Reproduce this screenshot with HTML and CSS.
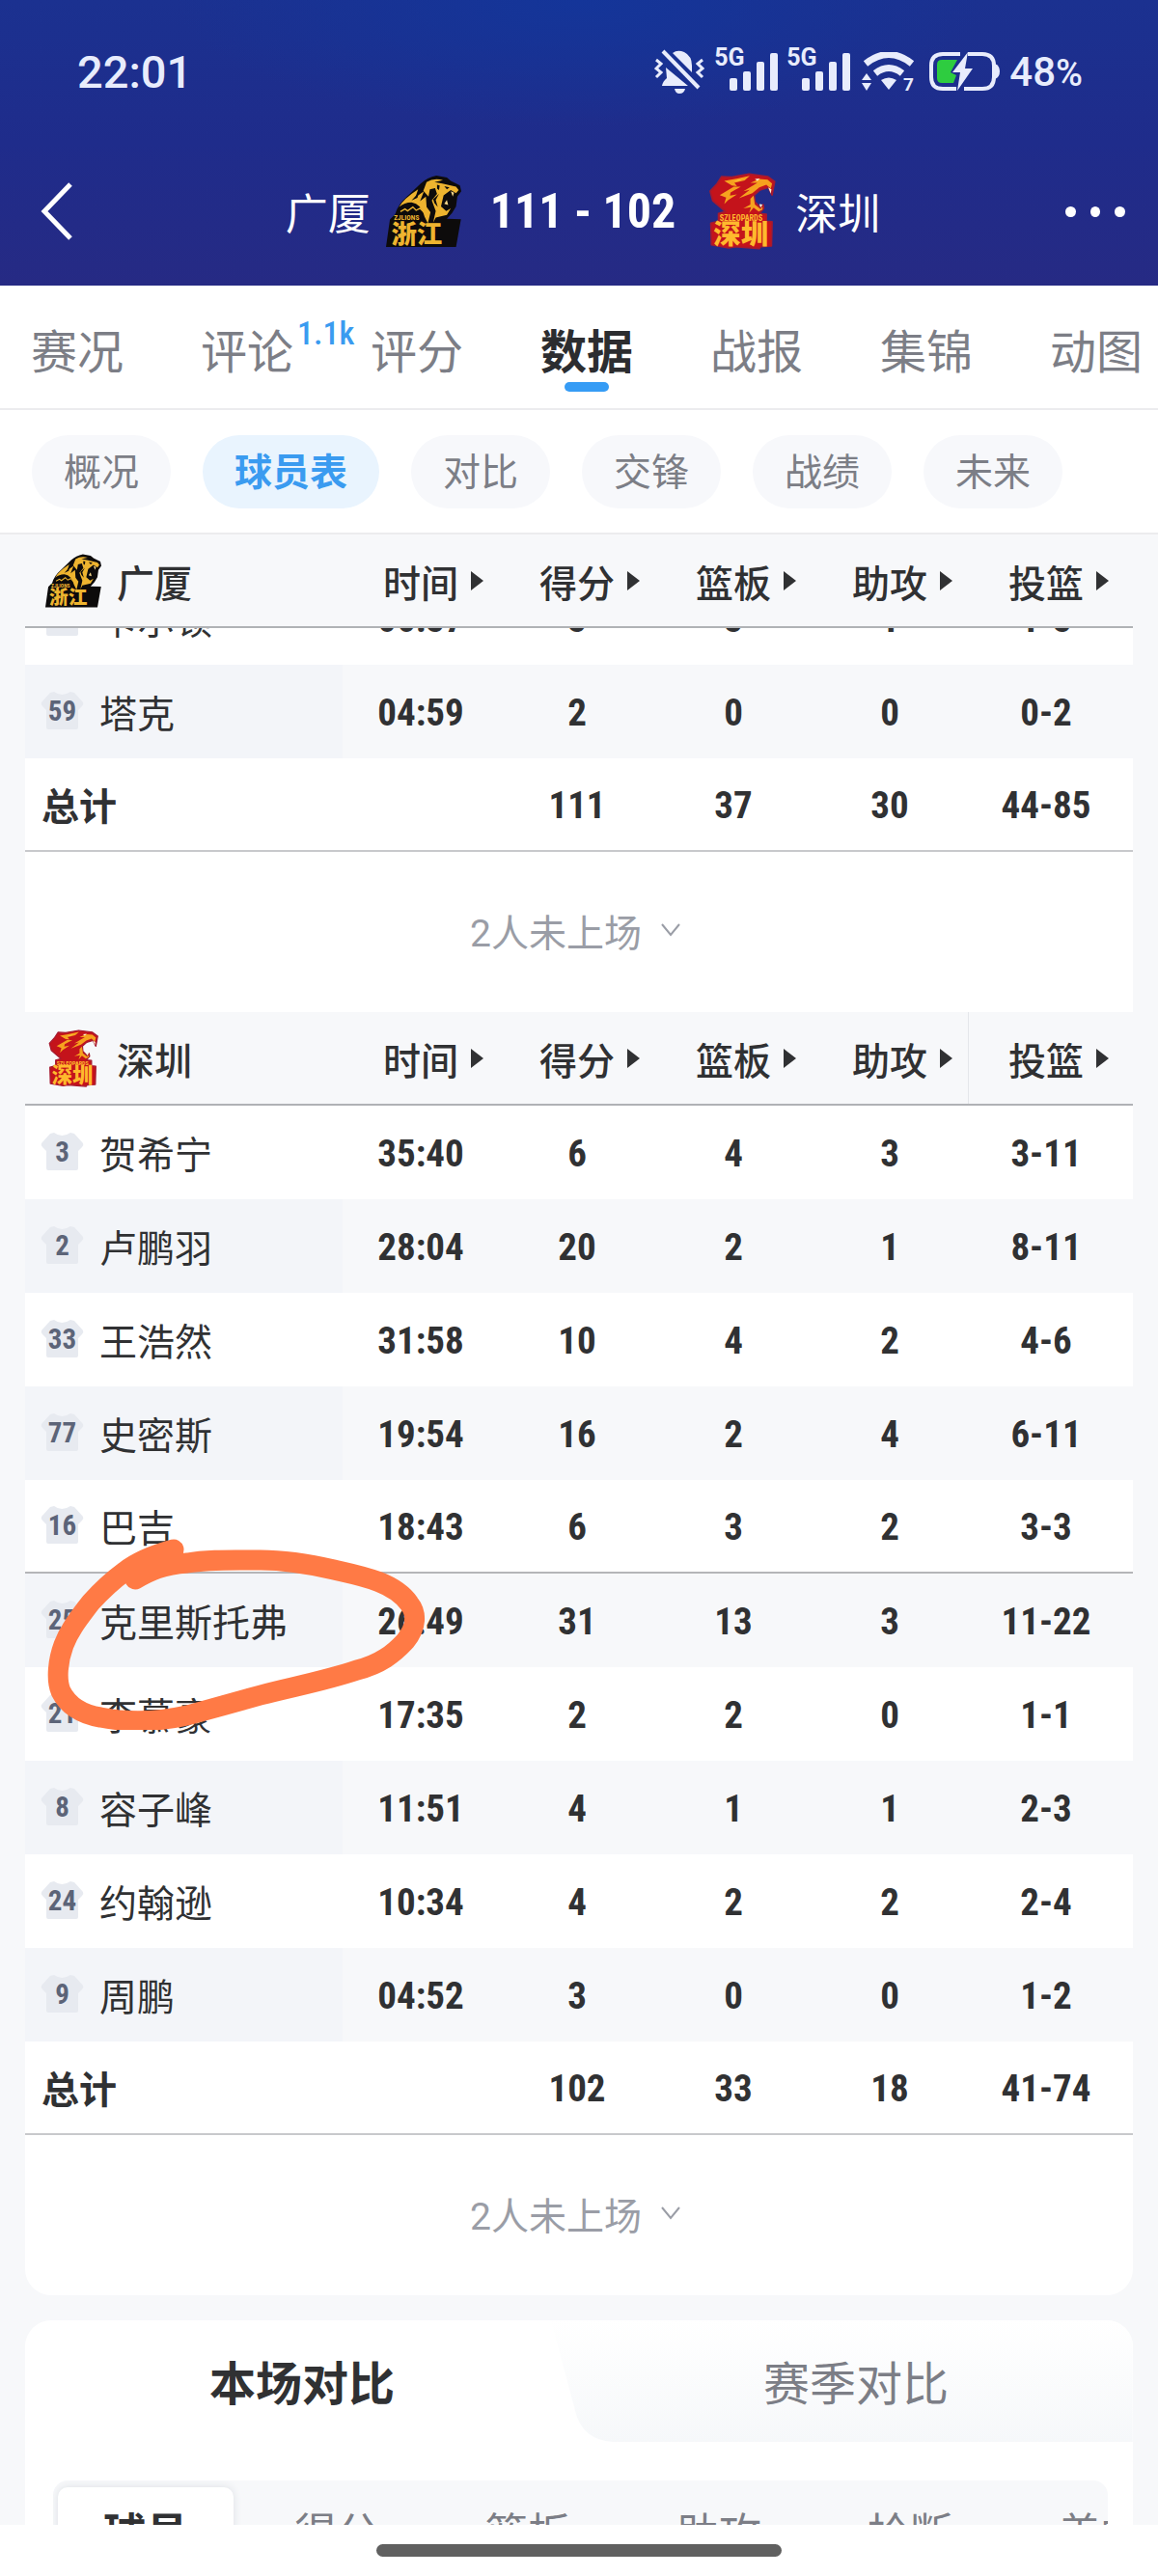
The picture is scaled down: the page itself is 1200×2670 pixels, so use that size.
FILE: index.html
```html
<!DOCTYPE html>
<html lang="zh-CN">
<head>
    <meta charset="UTF-8">
    <meta name="viewport" content="width=device-width, initial-scale=1.0">
    <title>广厦 111 - 102 深圳</title>
    <link rel="stylesheet" href="styles.css">
</head>
<body>

    <!-- 共用图标 -->
    <svg class="defs" aria-hidden="true">
        <symbol id="logo-gs" viewBox="60 62 230 222">
            <path fill="#0d0b0b" d="M60 282 L72 198 L88 182 Q96 152 124 128 L166 88 Q186 70 214 64 L246 70 L258 80 L286 94 L290 112 L278 128 L274 158 L262 178 L246 196 L289 197 L274 282 Z"/>
            <path fill="#eeb42f" d="M100 160 Q112 136 158 106 L150 130 L176 112 L164 142 L182 128 L184 160 L196 176 L188 210 L178 190 Q168 150 138 146 Q116 146 100 160 Z"/>
            <path fill="#eeb42f" d="M184 84 Q206 70 234 78 L208 84 L232 88 L274 98 L282 108 L274 118 L258 108 L236 124 L228 158 L244 172 L258 164 L246 184 L212 192 L204 208 L212 172 L200 140 L216 120 L210 102 L194 106 L190 128 L174 110 Z"/>
            <path fill="#0d0b0b" d="M216 92 L224 94 L222 108 L216 104 Z M238 96 L254 100 L246 106 Z M222 120 L212 138 L218 160 L208 148 L204 136 Z M160 116 L138 140 L156 132 Z"/>
            <path fill="#f6d78a" d="M258 112 L264 128 L268 116 Z M238 150 L246 138 L250 154 Z"/>
            <path fill="none" stroke="#eeb42f" stroke-width="4" d="M104 174 L118 166 L126 172 L142 160 L152 170 L164 164 L176 176"/>
            <text x="84" y="200" class="logo-small" fill="#eeb42f">ZJLIONS</text>
            <text x="76" y="269" class="logo-word" fill="#eeb42f">浙江</text>
        </symbol>
        <symbol id="logo-sz" viewBox="76 54 212 242">
            <path fill="#c4131b" stroke="#a51a30" stroke-width="5" stroke-linejoin="round" d="M82 112 L104 88 L118 66 L150 68 L204 58 L262 66 L284 82 L276 124 L264 100 L238 108 L220 124 L222 146 L240 164 L248 154 L250 166 L236 182 L258 184 L258 206 L276 208 L274 284 L240 286 L236 292 L160 286 L140 290 L86 280 L84 212 L108 206 L108 182 L130 176 L90 142 Z"/>
            <path fill="#f6a21f" d="M126 80 L160 74 L206 64 L190 78 L158 86 L166 96 L150 94 Z M262 76 L276 88 L272 104 L258 92 L236 100 L214 118 L172 134 L206 108 L186 112 L230 86 L208 86 L236 74 Z M112 124 L156 98 L178 98 L146 116 L144 126 L166 122 L138 140 L126 152 L132 132 Z M208 136 L218 126 L222 154 L240 168 L246 160 L246 170 L234 176 L218 164 L204 180 L210 162 L186 166 L208 154 Z"/>
            <path fill="#fff4d8" d="M264 100 L274 106 L272 120 Z M236 152 L246 154 L240 164 Z M222 74 L238 72 L230 80 Z"/>
            <path fill="#ffd34c" d="M156 80 L184 74 L170 80 Z"/>
            <text x="112" y="205" class="logo-mini" fill="#ffb92d">SZLEOPARDS</text>
            <text x="92" y="277" class="logo-word logo-word-sz" fill="#ffb92d">深圳</text>
        </symbol>
        <symbol id="jersey" viewBox="0 0 45 40">
            <path fill="#e7eaf0" d="M10 1 L14 0 Q22 6 31 0 L35 1 L44 11 Q45 13 43 15 L39 19 V37 Q39 39 37 39 H8 Q6 39 6 37 V19 L2 15 Q0 13 1 11 Z"/>
        </symbol>
        <symbol id="signal" viewBox="0 0 50 40">
            <rect x="0" y="27" width="8" height="13" rx="2"/>
            <rect x="14" y="20" width="8" height="20" rx="2"/>
            <rect x="28" y="10" width="8" height="30" rx="2"/>
            <rect x="42" y="1" width="8" height="39" rx="2"/>
        </symbol>
        <symbol id="chevron" viewBox="0 0 20 14">
            <path fill="none" stroke="#9a9da6" stroke-width="2" d="M1 1 L10 12 L19 1"/>
        </symbol>
    </svg>

    <header class="top">
        <!-- 状态栏 -->
        <div class="status">
            <span class="clock">22:01</span>
            <div class="status-icons">
                <svg class="icon-bell" viewBox="0 0 53 46">
                    <path d="M19 4 Q24 0 31 3 Q39 7 39 17 V24 Z M12 19 L35 38 H8 Q9 33 13 30 Z M21 41 H32 Q31 46 26 46 Q22 46 21 41 Z"/>
                    <path class="line" d="M9 2 L46 40"/>
                    <path class="line thin" d="M2 11 L7 15 L2 20 L7 24 L2 29 M50 11 L45 15 L50 20 L45 24 L50 29"/>
                </svg>
                <span class="sim"><span class="net">5G</span><svg class="icon-signal"><use href="#signal"/></svg></span>
                <span class="sim"><span class="net">5G</span><svg class="icon-signal"><use href="#signal"/></svg></span>
                <svg class="icon-wifi" viewBox="0 0 55 40">
                    <path class="line wide" d="M4 12 Q28 -7 52 12 M14 22 Q28 11 42 22"/>
                    <path d="M20 29 Q28 24 36 29 L28 39 Z M5 22 L10 29 H0 Z M0 32 H10 L5 40 Z"/>
                    <text x="43" y="40" class="wifi-num">7</text>
                </svg>
                <svg class="icon-battery" viewBox="0 0 74 40">
                    <path class="line" d="M32 2 H14 Q2 2 2 14 V26 Q2 38 14 38 H28 M40 2 H55 Q67 2 67 14 V26 Q67 38 55 38 H36"/>
                    <path d="M68 12 Q73 14 73 20 Q73 26 68 28 Z"/>
                    <path fill="#2ecc40" d="M13 8 H29 L22 21 L28 24 L25 32 H13 Q8 32 8 27 V13 Q8 8 13 8 Z"/>
                    <path d="M40 0 L24 21 H32 L29 40 L45 17 H37 Z"/>
                </svg>
                <span class="percent">48<small>%</small></span>
            </div>
        </div>
        <!-- 比分 -->
        <div class="score-bar">
            <button class="back" aria-label="返回">
                <svg viewBox="0 0 34 60"><path fill="none" stroke="#fff" stroke-width="5" d="M31 2 L4 30 L31 58"/></svg>
            </button>
            <div class="match">
                <span>广厦</span>
                <svg class="match-logo"><use href="#logo-gs"/></svg>
                <strong class="score">111 - 102</strong>
                <svg class="match-logo"><use href="#logo-sz"/></svg>
                <span>深圳</span>
            </div>
            <button class="more" aria-label="更多"><i></i><i></i><i></i></button>
        </div>
    </header>

    <nav class="tabs">
        <a href="#">赛况</a>
        <a href="#">评论<sup>1.1k</sup></a>
        <a href="#">评分</a>
        <a href="#" class="active">数据</a>
        <a href="#">战报</a>
        <a href="#">集锦</a>
        <a href="#">动图</a>
    </nav>

    <nav class="pills">
        <a href="#">概况</a>
        <a href="#" class="active">球员表</a>
        <a href="#">对比</a>
        <a href="#">交锋</a>
        <a href="#">战绩</a>
        <a href="#">未来</a>
    </nav>

    <main class="content">
        <!-- 广厦 -->
        <section class="team team-first">
            <table>
                <colgroup><col><col class="stat"><col class="stat"><col class="stat"><col class="stat"><col class="stat"><col class="edge"></colgroup>
                <thead>
                    <tr>
                        <th><div class="team-name"><svg><use href="#logo-gs"/></svg>广厦</div></th>
                        <th><button>时间</button></th>
                        <th><button>得分</button></th>
                        <th><button>篮板</button></th>
                        <th><button>助攻</button></th>
                        <th><button>投篮</button></th>
                        <th></th>
                    </tr>
                </thead>
                <tbody>
                    <tr><td><div class="player"><span class="num"><svg><use href="#jersey"/></svg><b>22</b></span>卡尔顿</div></td><td>06:37</td><td>3</td><td>3</td><td>1</td><td>1-3</td><td></td></tr>
                    <tr><td><div class="player"><span class="num"><svg><use href="#jersey"/></svg><b>59</b></span>塔克</div></td><td>04:59</td><td>2</td><td>0</td><td>0</td><td>0-2</td><td></td></tr>
                </tbody>
                <tfoot>
                    <tr><td>总计</td><td></td><td>111</td><td>37</td><td>30</td><td>44-85</td><td></td></tr>
                </tfoot>
            </table>
            <button class="absent">2人未上场<svg><use href="#chevron"/></svg></button>
        </section>

        <!-- 深圳 -->
        <section class="team team-last">
            <table>
                <colgroup><col><col class="stat"><col class="stat"><col class="stat"><col class="stat"><col class="stat"><col class="edge"></colgroup>
                <thead>
                    <tr>
                        <th><div class="team-name"><svg><use href="#logo-sz"/></svg>深圳</div></th>
                        <th><button>时间</button></th>
                        <th><button>得分</button></th>
                        <th><button>篮板</button></th>
                        <th><button>助攻</button></th>
                        <th class="divider"><button>投篮</button></th>
                        <th></th>
                    </tr>
                </thead>
                <tbody>
                    <tr><td><div class="player"><span class="num"><svg><use href="#jersey"/></svg><b>3</b></span>贺希宁</div></td><td>35:40</td><td>6</td><td>4</td><td>3</td><td>3-11</td><td></td></tr>
                    <tr><td><div class="player"><span class="num"><svg><use href="#jersey"/></svg><b>2</b></span>卢鹏羽</div></td><td>28:04</td><td>20</td><td>2</td><td>1</td><td>8-11</td><td></td></tr>
                    <tr><td><div class="player"><span class="num"><svg><use href="#jersey"/></svg><b>33</b></span>王浩然</div></td><td>31:58</td><td>10</td><td>4</td><td>2</td><td>4-6</td><td></td></tr>
                    <tr><td><div class="player"><span class="num"><svg><use href="#jersey"/></svg><b>77</b></span>史密斯</div></td><td>19:54</td><td>16</td><td>2</td><td>4</td><td>6-11</td><td></td></tr>
                    <tr class="starters-end"><td><div class="player"><span class="num"><svg><use href="#jersey"/></svg><b>16</b></span>巴吉</div></td><td>18:43</td><td>6</td><td>3</td><td>2</td><td>3-3</td><td></td></tr>
                    <tr><td><div class="player"><span class="num"><svg><use href="#jersey"/></svg><b>25</b></span>克里斯托弗</div></td><td>26:49</td><td>31</td><td>13</td><td>3</td><td>11-22</td><td></td></tr>
                    <tr><td><div class="player"><span class="num"><svg><use href="#jersey"/></svg><b>21</b></span>李慕豪</div></td><td>17:35</td><td>2</td><td>2</td><td>0</td><td>1-1</td><td></td></tr>
                    <tr><td><div class="player"><span class="num"><svg><use href="#jersey"/></svg><b>8</b></span>容子峰</div></td><td>11:51</td><td>4</td><td>1</td><td>1</td><td>2-3</td><td></td></tr>
                    <tr><td><div class="player"><span class="num"><svg><use href="#jersey"/></svg><b>24</b></span>约翰逊</div></td><td>10:34</td><td>4</td><td>2</td><td>2</td><td>2-4</td><td></td></tr>
                    <tr><td><div class="player"><span class="num"><svg><use href="#jersey"/></svg><b>9</b></span>周鹏</div></td><td>04:52</td><td>3</td><td>0</td><td>0</td><td>1-2</td><td></td></tr>
                </tbody>
                <tfoot>
                    <tr><td>总计</td><td></td><td>102</td><td>33</td><td>18</td><td>41-74</td><td></td></tr>
                </tfoot>
            </table>
            <button class="absent">2人未上场<svg><use href="#chevron"/></svg></button>
            <!-- 手绘圈 -->
            <svg class="marker" viewBox="0 0 400 200">
                <path d="M138 13 C112 20 96 29 87 36 C72 47 62 57 52 68 C40 84 30 96 24 112 C18 128 16 148 21 160 C28 174 42 184 62 187 C92 193 120 192 152 185 L228 164 C262 155 292 150 328 138 C352 132 366 121 378 108 C390 93 390 79 382 69 C366 46 330 40 304 34 C278 28 252 24 228 24 C198 24 174 23 152 27 C126 29 114 35 98 44"/>
            </svg>
        </section>

        <!-- 对比 -->
        <section class="compare">
            <div class="compare-tabs">
                <button class="active">本场对比</button>
                <button>
                    <svg viewBox="0 0 600 126" preserveAspectRatio="none">
                        <linearGradient id="fade" x2="0" y2="1"><stop offset="0" stop-color="#ffffff"/><stop offset="1" stop-color="#f6f8fa"/></linearGradient>
                        <path fill="url(#fade)" d="M0 0 H600 V126 H64 Q32 124 25 94 Z"/>
                    </svg>
                    <span>赛季对比</span>
                </button>
            </div>
            <div class="stat-tabs">
                <button class="active">球员</button>
                <button>得分</button>
                <button>篮板</button>
                <button>助攻</button>
                <button>抢断</button>
                <button>盖帽</button>
            </div>
        </section>
    </main>

    <footer class="home-bar"><span></span></footer>

</body>
</html>
```
FILE: styles.css
```css
* { box-sizing: border-box; }
body { margin: 0; height: 100vh; display: flex; flex-direction: column; font-family: Roboto, "Noto Sans CJK SC", sans-serif; font-size: 39px; color: #303133; background: #f7f8fa; overflow: hidden; }
button { font: inherit; color: inherit; border: 0; padding: 0; margin: 0; background: none; cursor: pointer; }
a { color: inherit; text-decoration: none; }
.defs { display: none; }
.logo-small { font: bold 22px "Roboto Condensed", sans-serif; }
.logo-mini { font: bold 25px "Roboto Condensed", sans-serif; }
.logo-word { font: 900 78px "Noto Sans CJK SC", sans-serif; }
.logo-word-sz { font-size: 86px; }

/* 顶部 */
.top { flex: none; height: 296px; color: #fff; background: radial-gradient(ellipse 420px 130px at 50% 0, #143599, transparent), linear-gradient(#1b3190, #1f2c8b 50%, #262a84); }
.status { height: 148px; padding: 0 78px 0 80px; display: flex; align-items: center; justify-content: space-between; color: #e8ecfc; }
.clock { font-size: 47px; font-weight: 500; }
.status-icons { display: flex; align-items: center; gap: 9px; height: 48px; fill: #e8ecfc; }
.status-icons .line { fill: none; stroke: #e8ecfc; stroke-width: 4px; }
.status-icons .thin { stroke-width: 3px; }
.status-icons .wide { stroke-width: 7px; }
.icon-bell { width: 53px; height: 46px; }
.sim { position: relative; width: 66px; height: 40px; display: flex; justify-content: flex-end; }
.net { position: absolute; left: 0; top: -4px; font-size: 25px; line-height: 20px; font-weight: 700; }
.icon-signal { width: 50px; height: 40px; }
.icon-wifi { width: 55px; height: 40px; margin: 0 6px 0 3px; }
.wifi-num { font: bold 19px Roboto, sans-serif; }
.icon-battery { width: 74px; height: 40px; }
.percent { font-size: 42px; font-weight: 500; }
.percent small { font-size: 38px; }

.score-bar { height: 142px; padding: 0 34px 0 42px; display: flex; align-items: center; justify-content: space-between; }
.back { width: 62px; height: 60px; display: flex; }
.back svg { width: 34px; height: 60px; }
.match { display: flex; align-items: center; font-size: 44px; }
.match-logo { width: 78px; height: 80px; margin: 0 16px; }
.score { margin: 0 14px; font-family: "Roboto Condensed", "Liberation Sans Narrow", sans-serif; font-size: 50px; font-weight: 700; }
.more { width: 62px; display: flex; gap: 15px; }
.more i { width: 11px; height: 11px; border-radius: 50%; background: #fff; }

/* 一级标签 */
.tabs { flex: none; height: 129px; padding: 0 32px; display: flex; gap: 80px; background: #fff; border-bottom: 2px solid #ececee; font-size: 48px; line-height: 140px; color: #7c7e86; }
.tabs a { position: relative; flex: none; }
.tabs .active { color: #2c2d30; font-weight: 700; }
.tabs .active::after { content: ""; position: absolute; left: 25px; right: 25px; top: 100px; height: 10px; border-radius: 5px; background: #369cf5; }
.tabs sup { position: absolute; left: 100px; top: 29px; font-family: "Roboto Condensed", "Liberation Sans Narrow", sans-serif; font-size: 34px; line-height: 40px; font-weight: 500; color: #3a9bf0; }

/* 二级标签 */
.pills { flex: none; height: 129px; padding: 0 33px; display: flex; align-items: center; gap: 33px; background: #fff; border-bottom: 2px solid #ececee; color: #7c7e86; }
.pills a { flex: none; height: 76px; padding: 0 33px; line-height: 78px; border-radius: 38px; background: #f7f8fb; }
.pills .active { background: #e9f4fe; color: #3a9bf0; font-weight: 700; }

/* 球员表 */
.content { flex: 1; min-height: 0; padding: 0 26px; overflow: hidden; }
.team { position: relative; background: #fff; }
.team-first { margin-top: -59px; }
.team-last { border-radius: 0 0 27px 27px; }
table { width: 100%; table-layout: fixed; border-collapse: separate; border-spacing: 0; }
.stat { width: 162px; }
.edge { width: 9px; }
th, td { height: 97px; padding: 0; text-align: center; }
th { background: #f7f8fa; border-bottom: 2px solid #b0b2b5; font-weight: 500; }
.team-first th { position: sticky; top: 0; z-index: 1; }
th button { padding-left: 26px; display: inline-flex; align-items: center; gap: 13px; }
th button::after { content: ""; border: solid transparent; border-width: 10px 0 10px 13px; border-left-color: #303133; }
.divider { box-shadow: inset 1px 0 #e4e6ea; }
.team-name { padding-left: 21px; display: flex; align-items: center; gap: 16px; }
.team-name svg { width: 58px; height: 60px; }
td { padding-top: 3px; font-family: "Roboto Condensed", "Liberation Sans Narrow", sans-serif; font-size: 39px; font-weight: 700; }
td:first-child { padding: 0 0 2px; text-align: left; font-family: Roboto, "Noto Sans CJK SC", sans-serif; font-size: 39px; font-weight: 400; }
tbody tr:nth-child(even) { background: #f7f8fa; }
tbody tr:nth-child(even) td:first-child { background: #f3f5f9; }
.starters-end td { border-bottom: 2px solid #b4b5b8; }
tfoot td { border-bottom: 2px solid #c8c9cc; }
tfoot td:first-child { padding-left: 17px; font-weight: 700; }
.player { padding-left: 16px; display: flex; align-items: center; gap: 16px; }
.num { width: 45px; height: 40px; display: grid; place-items: center; }
.num svg, .num b { grid-area: 1 / 1; }
.num svg { width: 45px; height: 40px; }
.num b { font-family: "Roboto Condensed", "Liberation Sans Narrow", sans-serif; font-size: 29px; line-height: 40px; color: #5c6478; }
.absent { width: 100%; height: 166px; padding: 0 8px 4px 0; display: flex; align-items: center; justify-content: center; gap: 20px; color: #9a9da6; }
.absent svg { width: 20px; height: 14px; }
.marker { position: absolute; left: 16px; top: 544px; width: 400px; height: 200px; fill: none; stroke: #ff7a45; stroke-width: 21px; stroke-linecap: round; stroke-linejoin: round; pointer-events: none; }

/* 对比 */
.compare { margin-top: 26px; border-radius: 27px 27px 0 0; background: #fff; overflow: hidden; }
.compare-tabs { display: flex; height: 126px; font-size: 48px; color: #7c7e86; }
.compare-tabs button { flex: 1; position: relative; padding-bottom: 3px; }
.compare-tabs .active { color: #303133; font-weight: 700; }
.compare-tabs svg { position: absolute; right: 0; top: 0; width: 105%; height: 100%; }
.compare-tabs span { position: relative; }
.stat-tabs { margin: 40px 26px 0 29px; padding: 7px 5px; display: flex; gap: 16px; border-radius: 15px; background: #f7f8fa; overflow: hidden; font-size: 44px; color: #7c7e86; }
.stat-tabs button { flex: none; width: 182px; height: 90px; border-radius: 10px; }
.stat-tabs .active { color: #303133; font-weight: 700; background: #fff; box-shadow: 0 0 8px #dcdfe4; }

.home-bar { flex: none; height: 53px; display: flex; justify-content: center; align-items: center; background: #fff; }
.home-bar span { width: 35%; height: 13px; border-radius: 7px; background: #606060; }
```
